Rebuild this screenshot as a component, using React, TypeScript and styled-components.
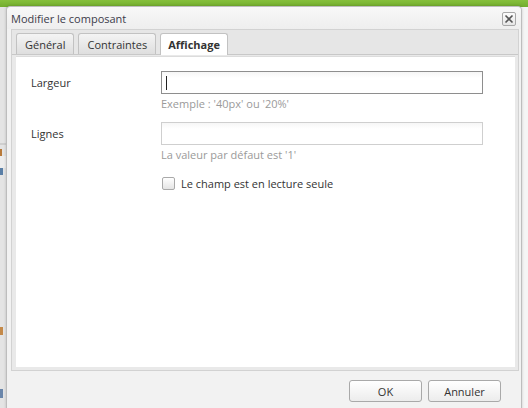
import React from "react";
import styled, { createGlobalStyle } from "styled-components";

const Global = createGlobalStyle`
  html, body { margin: 0; padding: 0; }
  body {
    width: 528px; height: 408px; overflow: hidden;
    background: #f4f4f4;
    font-family: "Open Sans", "Noto Sans", sans-serif;
  }
`;

const Page = styled.div`
  position: relative;
  width: 528px;
  height: 408px;
  overflow: hidden;
  background: #f5f5f5;
`;

const TopBar = styled.div`
  height: 7px;
  background: linear-gradient(#86c03c, #72ad2e);
`;

const SideStrip = styled.div`
  width: 6px;
  height: 401px;
  background: #e4e4e4;
  display: flex;
  flex-direction: column;
  overflow: hidden;
  border-right: 1px solid #d4d4d4;
`;

const SideBit = styled.div<{ $h: number; $c?: string; $w?: number }>`
  height: ${(p) => p.$h}px;
  width: ${(p) => p.$w ?? 6}px;
  background: ${(p) => p.$c || "transparent"};
`;

const Dialog = styled.div`
  position: absolute;
  left: 6px;
  top: 6px;
  width: 514px;
  height: 420px;
  border: 1px solid #bdbdbd;
  border-radius: 4px 4px 0 0;
  background: #f2f2f2;
  box-shadow: 0 0 3px rgba(0, 0, 0, 0.18);
  display: flex;
  flex-direction: column;
`;

const TitleBar = styled.div`
  height: 22px;
  display: flex;
  align-items: center;
  justify-content: space-between;
  padding: 0 5px 0 4px;
  background: linear-gradient(#f8f8f8, #eeeeee);
  border-radius: 4px 4px 0 0;
`;

const Title = styled.span`
  font-size: 11px;
  color: #3c3c4a;
`;

const CloseBtn = styled.button`
  width: 14px;
  height: 14px;
  padding: 0;
  border: 1px solid #a8a8a8;
  border-radius: 2px;
  background: linear-gradient(#fbfbfb, #e6e6e6);
  display: flex;
  align-items: center;
  justify-content: center;
  margin-top: 2px;
`;

const Body = styled.div`
  flex: 1;
  display: flex;
  flex-direction: column;
  padding: 0 2px 0 4px;
`;

const TabPanel = styled.div`
  height: 340px;
  border: 1px solid #d2d2d2;
  background: #e9e9e9;
  display: flex;
  flex-direction: column;
`;

const TabStrip = styled.div`
  height: 24px;
  display: flex;
  align-items: flex-end;
  gap: 4px;
  padding-left: 4px;
  background: #e6e6e6;
  border-bottom: 1px solid #c8c8c8;
`;

const Tab = styled.div<{ $active?: boolean }>`
  box-sizing: border-box;
  padding: 0 ${(p) => (p.$active ? 7 : 8)}px;
  border: 1px solid #c2c2c2;
  border-bottom: none;
  border-radius: 3px 3px 0 0;
  display: flex;
  align-items: center;
  font-size: 11px;
  color: #333;
  font-weight: ${(p) => (p.$active ? 700 : 400)};
  background: ${(p) => (p.$active ? "#ffffff" : "linear-gradient(#f4f4f4, #dedede)")};
  margin-bottom: ${(p) => (p.$active ? "-1px" : "0")};
  height: ${(p) => (p.$active ? "22px" : "21px")};
`;

const TabBody = styled.div`
  flex: 1;
  margin: 1px 3px 3px 4px;
  border-top: 1px solid #dcdcdc;
  background: #ffffff;
  padding: 14px 0 0 15px;
  display: grid;
  grid-template-columns: 130px 322px;
  grid-auto-rows: min-content;
`;

const Label = styled.label`
  font-size: 11px;
  color: #333;
  line-height: 23px;
`;

const Field = styled.div`
  display: flex;
  flex-direction: column;
`;

const Input = styled.div<{ $focus?: boolean }>`
  height: 23px;
  box-sizing: border-box;
  border: 1px solid ${(p) => (p.$focus ? "#8e8e8e" : "#cfcfcf")};
  background: linear-gradient(#f6f6f6, #ffffff 6px);
  display: flex;
  align-items: center;
  padding-left: 4px;
`;

const Caret = styled.span`
  width: 1px;
  height: 14px;
  background: #222;
`;

const Hint = styled.div`
  font-size: 11px;
  color: #9a9a9a;
  line-height: 18px;
  margin: 1px 0 9px;
`;

const CheckRow = styled.label`
  grid-column: 2;
  display: flex;
  align-items: center;
  gap: 6px;
  font-size: 11px;
  color: #333;
  height: 16px;
  margin-top: 2px;
`;

const Box = styled.span`
  width: 11px;
  height: 11px;
  margin-left: 1px;
  border: 1px solid #a9a9a9;
  border-radius: 2px;
  background: linear-gradient(#ffffff, #e4e4e4);
`;

const Footer = styled.div`
  display: flex;
  justify-content: flex-end;
  gap: 6px;
  padding: 9px 18px 0 0;
`;

const Button = styled.button`
  width: 73px;
  height: 22px;
  border: 1px solid #a9a9a9;
  border-radius: 3px;
  background: linear-gradient(#ffffff, #ececec);
  font-family: inherit;
  font-size: 11px;
  color: #333;
  padding: 0;
`;

export default function App() {
  return (
    <>
      <Global />
      <Page>
        <TopBar />
        <SideStrip>
          <SideBit $h={136} />
          <SideBit $h={2} $c="#cfcfcf" />
          <SideBit $h={4} />
          <SideBit $h={7} $w={2} $c="#b87a3a" />
          <SideBit $h={12} $c="#ededed" />
          <SideBit $h={7} $w={3} $c="#5a7fa6" />
          <SideBit $h={152} />
          <SideBit $h={8} $w={3} $c="#c48a4a" />
          <SideBit $h={54} />
          <SideBit $h={9} $w={3} $c="#6a86aa" />
        </SideStrip>
        <Dialog>
          <TitleBar>
            <Title>Modifier le composant</Title>
            <CloseBtn aria-label="Fermer">
              <svg width="10" height="10" viewBox="0 0 10 10">
                <path d="M1.5 1.5 L8.5 8.5 M8.5 1.5 L1.5 8.5" stroke="#555" strokeWidth="1.6" />
              </svg>
            </CloseBtn>
          </TitleBar>
          <Body>
            <TabPanel>
              <TabStrip>
                <Tab>Général</Tab>
                <Tab>Contraintes</Tab>
                <Tab $active>Affichage</Tab>
              </TabStrip>
              <TabBody>
                <Label>Largeur</Label>
                <Field>
                  <Input $focus>
                    <Caret />
                  </Input>
                  <Hint>Exemple : '40px' ou '20%'</Hint>
                </Field>
                <Label>Lignes</Label>
                <Field>
                  <Input />
                  <Hint>La valeur par défaut est '1'</Hint>
                </Field>
                <CheckRow>
                  <Box />
                  Le champ est en lecture seule
                </CheckRow>
              </TabBody>
            </TabPanel>
            <Footer>
              <Button>OK</Button>
              <Button>Annuler</Button>
            </Footer>
          </Body>
        </Dialog>
      </Page>
    </>
  );
}
